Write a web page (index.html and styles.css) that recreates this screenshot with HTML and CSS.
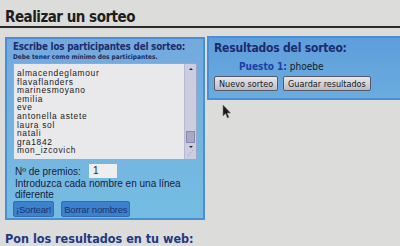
FILE: index.html
```html
<!DOCTYPE html>
<html lang="es">
<head>
    <meta charset="UTF-8">
    <meta name="viewport" content="width=device-width, initial-scale=1.0">
    <title>Realizar un sorteo</title>
    <link rel="stylesheet" href="styles.css">
</head>
<body>
    <h1 class="page-title">Realizar un sorteo</h1>
    <div class="sorteo">
        <div class="panel participants">
            <h3>Escribe los participantes del sorteo:</h3>
            <p class="hint">Debe tener como mínimo dos participantes.</p>
            <div class="names">
                <div class="names-list">
                    <div>almacendeglamour</div>
                    <div>flavaflanders</div>
                    <div>marinesmoyano</div>
                    <div>emilia</div>
                    <div>eve</div>
                    <div>antonella astete</div>
                    <div>laura sol</div>
                    <div>natali</div>
                    <div>gra1842</div>
                    <div>mon_izcovich</div>
                </div>
                <div class="scrollbar">
                    <span class="arrow up"></span>
                    <span class="thumb"></span>
                    <span class="arrow down"></span>
                    <span class="grip">⋰</span>
                </div>
            </div>
            <div class="prizes">
                <label>Nº de premios:</label>
                <span class="prize-input">1</span>
            </div>
            <p class="note">Introduzca cada nombre en una línea diferente</p>
            <div class="actions">
                <button type="button" class="blue-btn">¡Sortear!</button>
                <button type="button" class="blue-btn">Borrar nombres</button>
            </div>
        </div>
        <div class="panel results">
            <h3>Resultados del sorteo:</h3>
            <p class="winner"><b>Puesto 1:</b> phoebe</p>
            <div class="actions">
                <button type="button" class="gray-btn">Nuevo sorteo</button>
                <button type="button" class="gray-btn">Guardar resultados</button>
            </div>
            <svg class="cursor" width="10" height="15" viewBox="0 0 10 15">
                <path d="M1 1 L1 12 L3.5 9.5 L5.5 14 L7 13.3 L5 9 L8.5 9 Z" fill="#1a1a1a" stroke="#777" stroke-width="0.6"/>
            </svg>
        </div>
    </div>
    <h2 class="embed-title">Pon los resultados en tu web:</h2>
</body>
</html>
```

FILE: styles.css
```css
body {
    margin: 0;
    padding: 10px 0 0 5px;
    background: #dcdcda;
    color: #222;
    font-family: "DejaVu Sans Condensed", "DejaVu Sans", sans-serif;
    overflow: hidden;
}
.page-title {
    margin: 0 0 9px -5px;
    padding: 0 0 1px 5px;
    font-size: 15px;
    line-height: 15px;
    letter-spacing: -0.5px;
    font-weight: bold;
    color: #1e1e1e;
    border-bottom: 2px solid #2a2a2a;
}
.sorteo {
    display: flex;
    align-items: flex-start;
}
.panel {
    box-sizing: border-box;
    border: 2px solid #4a8fd4;
    background: linear-gradient(#74a9de, #74bde2);
}
.panel h3 {
    margin: 0;
    font-size: 9.8px;
    line-height: 11px;
    letter-spacing: -0.2px;
    color: #1c2c6c;
}
.participants {
    width: 200px;
    height: 183px;
    padding: 2px 6px 0 6px;
}
.hint {
    margin: 1px 0 2px;
    font-size: 6.5px;
    line-height: 8px;
    font-weight: bold;
    color: #1c2c5c;
}
.names {
    display: flex;
    height: 97px;
    box-sizing: border-box;
    background: #e9e9eb;
    border: 1px solid #9aa8c0;
}
.names-list {
    flex: 1;
    padding: 5px 0 0 3px;
    font-family: "Liberation Sans", Arial, sans-serif;
    font-size: 8.4px;
    line-height: 8.6px;
    letter-spacing: 0.7px;
    color: #1a1a1a;
}
.scrollbar {
    width: 11px;
    display: flex;
    flex-direction: column;
    align-items: center;
    background: #cdcde2;
    border-left: 1px solid #b8b8d0;
}
.arrow {
    width: 0;
    height: 0;
    margin: 4px 0;
    border-left: 2px solid transparent;
    border-right: 2px solid transparent;
}
.arrow.up {
    border-bottom: 2px solid #222;
}
.arrow.down {
    margin: 3px 0 0;
    border-top: 2px solid #222;
}
.thumb {
    margin-top: auto;
    width: 9px;
    height: 12px;
    background: #a9a9c7;
    border: 1px solid #8888aa;
    box-sizing: border-box;
}
.grip {
    height: 11px;
    font-size: 7px;
    line-height: 11px;
    color: #777;
}
.prizes {
    display: flex;
    align-items: center;
    gap: 8px;
    margin-top: 4px;
    font-family: "Liberation Sans", Arial, sans-serif;
    font-size: 10px;
    color: #1a2040;
}
.prizes label {
    padding-left: 2px;
}
.prize-input {
    width: 24px;
    height: 14px;
    line-height: 14px;
    padding-left: 4px;
    background: #eeeeee;
    font-size: 10px;
}
.note {
    margin: 1px 0 0 2px;
    font-family: "Liberation Sans", Arial, sans-serif;
    font-size: 10px;
    line-height: 10.5px;
    color: #1a2040;
    width: 170px;
}
.actions {
    display: flex;
    gap: 7px;
}
.participants .actions {
    margin-top: 1px;
}
.blue-btn {
    height: 16px;
    padding: 0 2px;
    border: 1px solid #2d6eb8;
    border-radius: 2px;
    background: #3d80cc;
    color: #1a3468;
    font-family: "Liberation Sans", Arial, sans-serif;
    font-size: 9.5px;
    letter-spacing: -0.2px;
}
.results {
    position: relative;
    flex: 1;
    margin-left: 2px;
    margin-top: -1px;
    height: 64px;
    padding: 3px 5px 0 5px;
    border-right: none;
    background: linear-gradient(#5e9edc, #69acde);
}
.results h3 {
    font-size: 12px;
    line-height: 15px;
}
.winner {
    margin: 5px 0 3px 25px;
    font-size: 10px;
    line-height: 12px;
    color: #1a1a1a;
}
.winner b {
    color: #1c3fa6;
}
.results .actions {
    gap: 5px;
}
.gray-btn {
    height: 15px;
    padding: 0 4px;
    border: 1px solid #5a5a66;
    border-radius: 2px;
    background: linear-gradient(#e8e8ea, #bcbcc4);
    color: #1a1a1a;
    font-family: "DejaVu Sans Condensed", "DejaVu Sans", sans-serif;
    font-size: 9px;
}
.cursor {
    position: absolute;
    left: 13px;
    top: 66px;
}
.embed-title {
    margin: 11px 0 0;
    font-size: 12.5px;
    line-height: 15px;
    color: #1c3a84;
}
```
